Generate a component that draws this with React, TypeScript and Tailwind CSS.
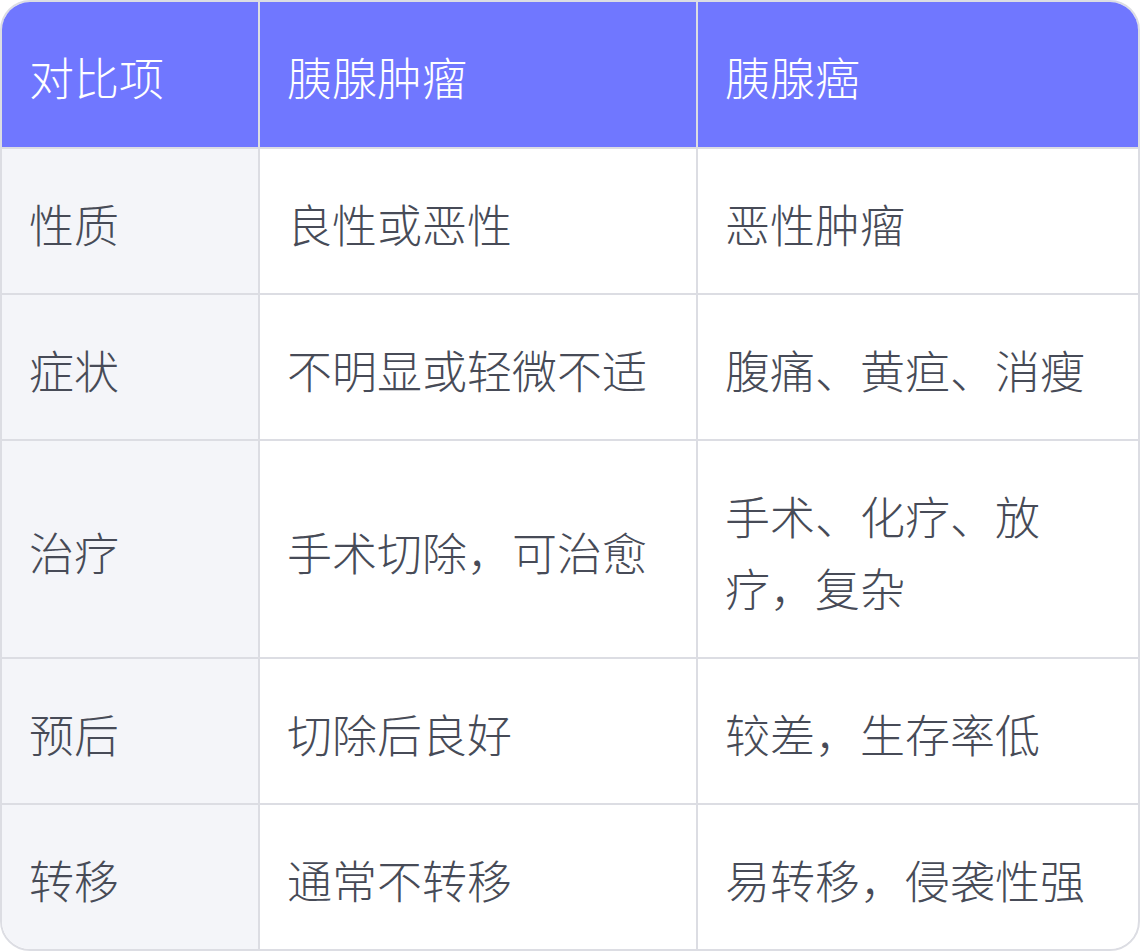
const rows: [string, string, string][] = [
  ["性质", "良性或恶性", "恶性肿瘤"],
  ["症状", "不明显或轻微不适", "腹痛、黄疸、消瘦"],
  ["治疗", "手术切除，可治愈", "手术、化疗、放疗，复杂"],
  ["预后", "切除后良好", "较差，生存率低"],
  ["转移", "通常不转移", "易转移，侵袭性强"],
];

export default function App() {
  return (
    <div className="w-[1140px] bg-white font-['Noto_Sans_CJK_SC','Noto_Sans',sans-serif] text-[45px] font-light leading-[72px]">
      <div className="overflow-hidden rounded-[30px] border-2 border-[#dcdde3]">
        <div className="flex bg-[#7077ff] text-white">
          <div className="w-[256px] shrink-0 px-[27px] pt-[39px] pb-[34px]">对比项</div>
          <div className="w-[438px] shrink-0 border-l-2 border-[#dcdde3] px-[27px] pt-[39px] pb-[34px]">胰腺肿瘤</div>
          <div className="w-[438px] shrink-0 border-l-2 border-[#dcdde3] px-[27px] pt-[39px] pb-[34px]">胰腺癌</div>
        </div>
        {rows.map(([a, b, c]) => (
          <div key={a} className="flex border-t-2 border-[#dcdde3] text-[#474b57]">
            <div className="flex w-[256px] shrink-0 items-center bg-[#f4f5f9] px-[27px] pt-[39px] pb-[33px]">{a}</div>
            <div className="flex w-[438px] shrink-0 items-center border-l-2 border-[#dcdde3] bg-white px-[27px] pt-[39px] pb-[33px]">{b}</div>
            <div className="flex w-[438px] shrink-0 items-center border-l-2 border-[#dcdde3] bg-white px-[27px] pt-[39px] pb-[33px]">{c}</div>
          </div>
        ))}
      </div>
    </div>
  );
}
